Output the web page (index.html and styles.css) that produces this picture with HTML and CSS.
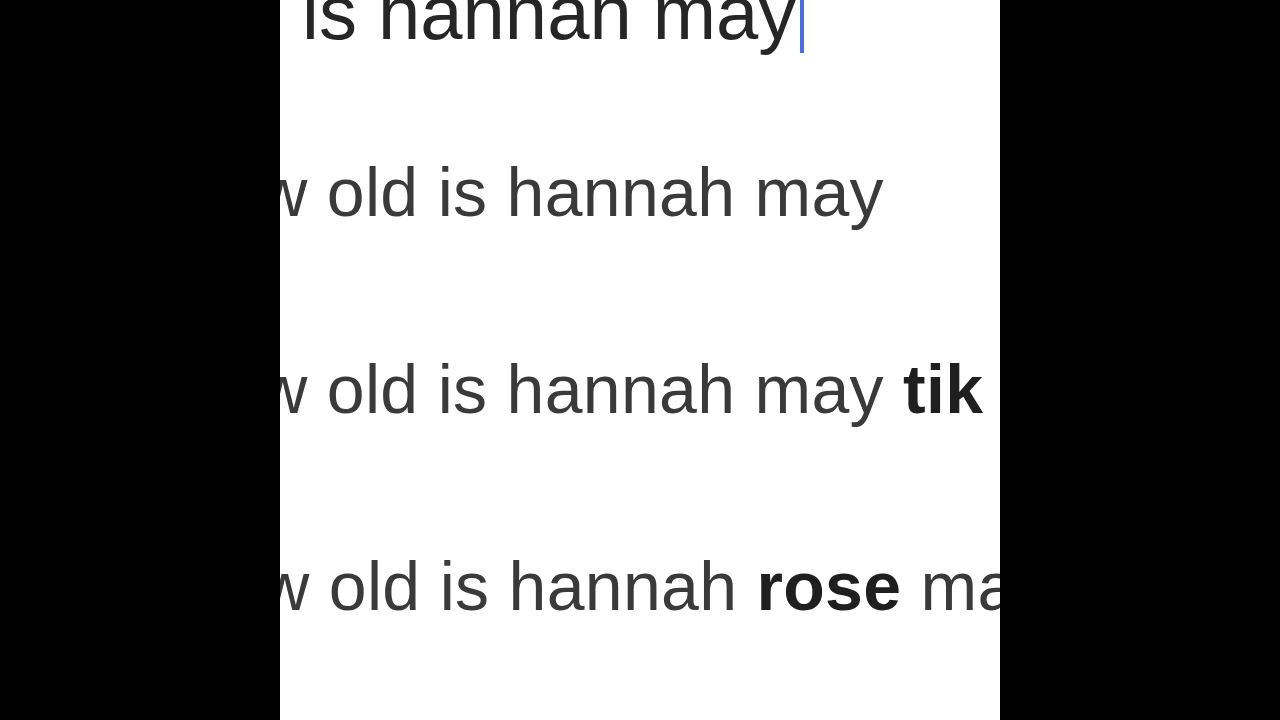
FILE: index.html
```html
<!DOCTYPE html>
<html lang="en">
<head>
  <meta charset="UTF-8" />
  <meta name="viewport" content="width=device-width, initial-scale=1.0"/>
  <title>how old is hannah may</title>
  <link rel="stylesheet" href="styles.css">
</head>
<body>

  <div class="screen">
    <div class="search">how old is hannah may<span class="caret"></span></div>

    <ul class="suggestions">
      <li>how old is hannah may</li>
      <li>how old is hannah may <b>tik tok</b></li>
      <li class="shift">how old is hannah <b>rose</b> may</li>
    </ul>
  </div>

</body>
</html>
```

FILE: styles.css
```css
html, body {
  margin: 0;
  padding: 0;
  background: #000;
  height: 100%;
}

body {
  display: flex;
  justify-content: center;
  font-family: "Liberation Sans", Arial, sans-serif;
}

.screen {
  width: 720px;
  height: 720px;
  background: #fff;
  overflow: hidden;
  white-space: nowrap;
}

/* the search field, zoomed and scrolled so only the end shows */
.search {
  margin-top: -27px;
  height: 80px;
  line-height: 80px;
  font-size: 76px;
  color: #262626;
  text-indent: -261px;
}

.caret {
  display: inline-block;
  width: 4px;
  height: 72px;
  margin-left: 4px;
  vertical-align: -14px;
  background: #4a6fe3;
}

.suggestions {
  list-style: none;
  margin: 0;
  padding: 41px 0 0 0;
}

.suggestions li {
  height: 197px;
  line-height: 197px;
  font-size: 68px;
  letter-spacing: 0.3px;
  color: #3a3a3a;
  text-indent: -98px;
}

.suggestions li.shift {
  text-indent: -96px;
}

.suggestions b {
  color: #1f1f1f;
}
```
